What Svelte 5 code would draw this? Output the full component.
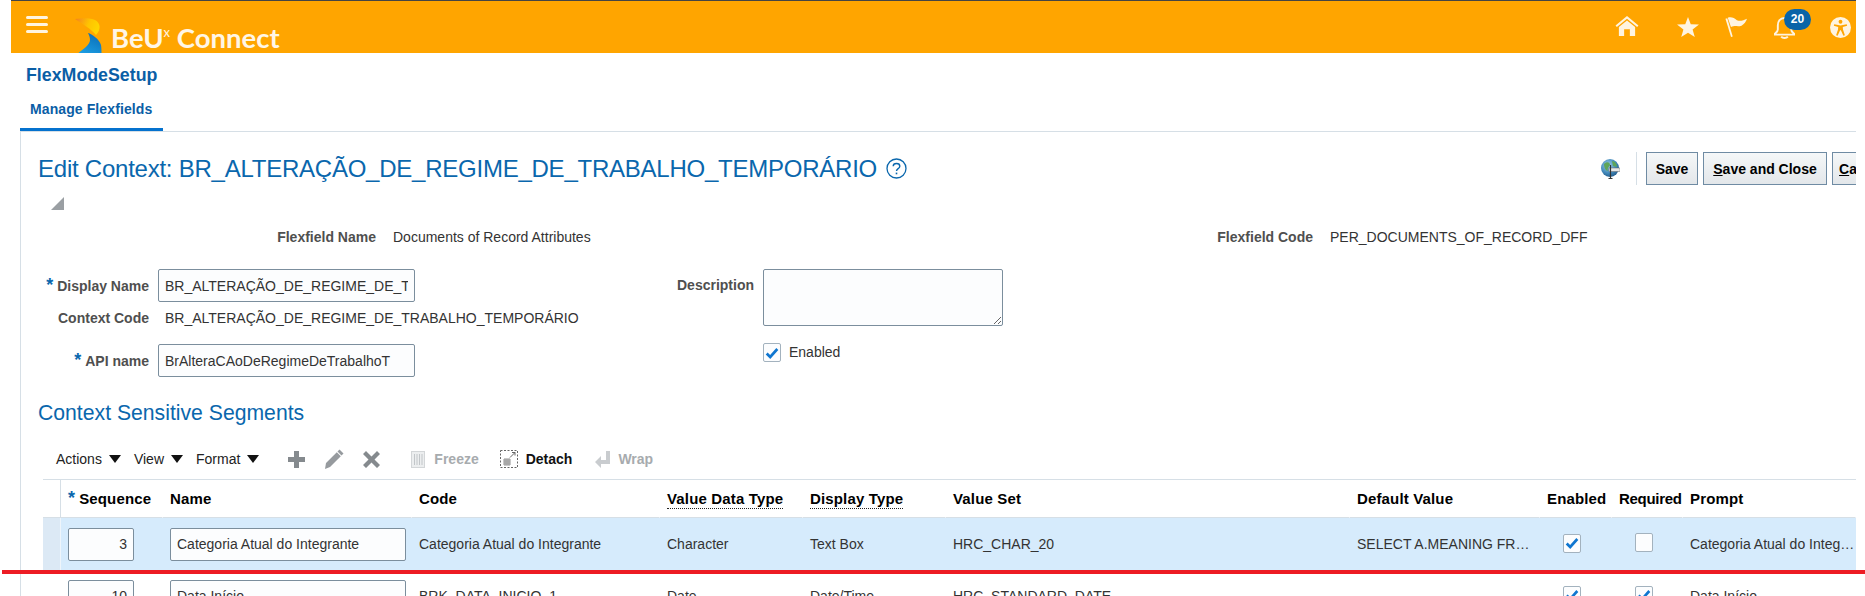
<script lang="ts">
  const columns = [
    { label: '', width: 18, key: 'sel' },
    { label: 'Sequence', width: 102, required: true },
    { label: 'Name', width: 249 },
    { label: 'Code', width: 248 },
    { label: 'Value Data Type', width: 143, dotted: true },
    { label: 'Display Type', width: 143, dotted: true },
    { label: 'Value Set', width: 404 },
    { label: 'Default Value', width: 190 },
    { label: 'Enabled', width: 72 },
    { label: 'Required', width: 71, tight: true },
    { label: 'Prompt', width: 173 }
  ];

  const rows = [
    {
      sequence: '3',
      name: 'Categoria Atual do Integrante',
      code: 'Categoria Atual do Integrante',
      dataType: 'Character',
      displayType: 'Text Box',
      valueSet: 'HRC_CHAR_20',
      defaultValue: 'SELECT A.MEANING FROM FND_LOOKUP_VALUES A',
      enabled: true,
      required: false,
      prompt: 'Categoria Atual do Integrante',
      selected: true
    },
    {
      sequence: '10',
      name: 'Data Início',
      code: 'BRK_DATA_INICIO_1',
      dataType: 'Date',
      displayType: 'Date/Time',
      valueSet: 'HRC_STANDARD_DATE',
      defaultValue: '',
      enabled: true,
      required: true,
      prompt: 'Data Início',
      selected: false
    }
  ];
</script>

{#snippet check(on)}
  <span class="check">
    {#if on}
      <svg viewBox="0 0 18 18" width="16" height="16" aria-hidden="true">
        <path d="M3 9.5 L7 13.5 L15 4.5" fill="none" stroke="#0f76d0" stroke-width="3" />
      </svg>
    {/if}
  </span>
{/snippet}

<div class="page">
  <header class="topbar">
    <div class="brand">
      <div class="burger"><i></i><i></i><i></i></div>
      <svg class="mark" viewBox="0 0 27 35" width="27" height="35" aria-hidden="true">
        <defs>
          <linearGradient id="markTop" x1="0" y1="0" x2="1" y2="0.3">
            <stop offset="0" stop-color="#f4801f" />
            <stop offset="0.6" stop-color="#ffc400" />
            <stop offset="1" stop-color="#ffd400" />
          </linearGradient>
          <linearGradient id="markBottom" x1="0.2" y1="1" x2="0.7" y2="0">
            <stop offset="0" stop-color="#1b9ce2" />
            <stop offset="1" stop-color="#0b6fb8" />
          </linearGradient>
        </defs>
        <path d="M0 1 C8 0 16 0 20 2 C26 5 26 12 21 17 C16 11 8 6 0 1 Z" fill="url(#markTop)" />
        <path d="M13 15 C17 16 24 21 26 27 C26.5 30 26.5 33 26.5 35 H3.5 C8 31 15 27 15 22 C15 19 14 17 13 15 Z" fill="url(#markBottom)" />
      </svg>
      <span class="brand-name">BeU<sup>x</sup> Connect</span>
    </div>
    <div class="top-icons">
      <svg class="i-home" viewBox="0 0 24 22" width="24" height="21" aria-hidden="true">
        <path d="M12 0 L24 10 L22.6 11.4 L12 2.8 L1.4 11.4 L0 10 Z M3.5 11.5 L12 4.6 L20.5 11.5 V21 H15 V14 H9 V21 H3.5 Z" fill="#fff4e0" />
      </svg>
      <svg class="i-star" viewBox="0 0 24 22" width="22" height="22" aria-hidden="true">
        <path d="M12 0 L15 8 L24 8.4 L17 13.6 L19.4 22 L12 17.2 L4.6 22 L7 13.6 L0 8.4 L9 8 Z" fill="#fff4e0" />
      </svg>
      <svg class="i-flag" viewBox="0 0 24 22" width="22" height="22" aria-hidden="true">
        <path d="M0.5 2 L2.5 1.4 L8.4 21.4 L6.6 22 Z" fill="#fff4e0" />
        <path d="M3 1 C7 -0.5 10 1.5 13 3.5 C16 5 20 4 24 2 C23 5 21 8 18 9.5 C14 11 11 9 6.5 11 Z" fill="#fff4e0" />
      </svg>
      <div class="bell-wrap">
        <svg viewBox="0 0 22 24" width="21" height="23" aria-hidden="true">
          <path d="M11 2 C6 2 4 6 4 10 V14 C4 16 2.5 17 1 18.5 V19.5 H21 V18.5 C19.5 17 18 16 18 14 V10 C18 6 16 2 11 2 Z" fill="none" stroke="#fff4e0" stroke-width="2" />
          <path d="M7.5 21.5 C9 23.5 13 23.5 14.5 21.5" fill="none" stroke="#fff4e0" stroke-width="2" />
        </svg>
        <span class="badge">20</span>
      </div>
      <svg class="i-access" viewBox="0 0 22 22" width="21" height="21" aria-hidden="true">
        <circle cx="11" cy="11" r="11" fill="#fff4e0" />
        <circle cx="11" cy="5" r="2" fill="#ffa500" />
        <path d="M4.5 7.6 L11 9 L17.5 7.6 L18 9.2 L13.4 10.6 L13.6 13 L15.6 19 L14 19.6 L11.4 14 H10.6 L8 19.6 L6.4 19 L8.4 13 L8.6 10.6 L4 9.2 Z" fill="#ffa500" />
      </svg>
    </div>
  </header>

  <div class="app-title">FlexModeSetup</div>
  <nav class="tabs">
    <span class="tab">Manage Flexfields</span>
  </nav>

  <main class="panel">
    <div class="title-row">
      <h1>Edit Context: BR_ALTERAÇÃO_DE_REGIME_DE_TRABALHO_TEMPORÁRIO</h1>
      <svg class="help" viewBox="0 0 21 21" width="21" height="21" aria-hidden="true">
        <circle cx="10.5" cy="10.5" r="9.5" fill="none" stroke="#0a67ad" stroke-width="1.3" />
        <path d="M7.2 8.2 C7.2 4.6 13.8 4.6 13.8 8.2 C13.8 10.6 10.5 10.6 10.5 13" fill="none" stroke="#0a67ad" stroke-width="1.4" />
        <rect x="9.7" y="14.6" width="1.6" height="1.7" fill="#0a67ad" />
      </svg>
      <div class="actions">
        <svg class="globe" viewBox="0 0 19 20" width="19" height="20" aria-hidden="true">
          <defs>
            <radialGradient id="globeFill" cx="0.4" cy="0.35" r="0.75">
              <stop offset="0" stop-color="#9fd1ea" />
              <stop offset="0.6" stop-color="#3f86b8" />
              <stop offset="1" stop-color="#1d4f7c" />
            </radialGradient>
          </defs>
          <circle cx="9" cy="9" r="9" fill="url(#globeFill)" />
          <path d="M3 5 C6 2 9 3 9 6 C8 8 6 9 7 12 C5 12 3 9 3 5 Z M11 2 C14 2 16 5 16 8 L12 7 Z" fill="#5fa55a" />
          <rect x="8" y="9" width="11" height="3.5" fill="#e7e7e7" stroke="#666" stroke-width="0.5" />
          <path d="M9.5 6 V19 M7.5 19.5 H11.5" stroke="#333" stroke-width="1.2" />
        </svg>
        <span class="divider"></span>
        <button type="button" class="btn btn--save">Save</button>
        <button type="button" class="btn btn--close"><u>S</u>ave and Close</button>
        <button type="button" class="btn btn--cancel"><u>C</u>ancel</button>
      </div>
    </div>

    <svg class="collapse" viewBox="0 0 13 13" width="13" height="13" aria-hidden="true">
      <path d="M13 0 V13 H0 Z" fill="#9a9fa3" />
    </svg>

    <div class="meta">
      <span class="label">Flexfield Name</span>
      <span class="value">Documents of Record Attributes</span>
      <span class="label">Flexfield Code</span>
      <span class="value">PER_DOCUMENTS_OF_RECORD_DFF</span>
    </div>

    <div class="form">
      <div class="form-left">
        <span class="label"><em>*</em>Display Name</span>
        <input class="field" readonly value="BR_ALTERAÇÃO_DE_REGIME_DE_TRABALHO_TEMPORÁRIO" />
        <span class="label label--static">Context Code</span>
        <span class="value value--static">BR_ALTERAÇÃO_DE_REGIME_DE_TRABALHO_TEMPORÁRIO</span>
        <span class="label"><em>*</em>API name</span>
        <input class="field" readonly value="BrAlteraCAoDeRegimeDeTrabalhoT" />
      </div>
      <div class="form-right">
        <span class="label">Description</span>
        <textarea class="area" readonly></textarea>
        <span></span>
        <label class="enabled">{@render check(true)}<span>Enabled</span></label>
      </div>
    </div>

    <h2>Context Sensitive Segments</h2>

    <div class="toolbar">
      <span class="menu">Actions <i class="caret"></i></span>
      <span class="menu">View <i class="caret"></i></span>
      <span class="menu">Format <i class="caret"></i></span>
      <svg class="tool tool--add" viewBox="0 0 17 17" width="17" height="17" aria-hidden="true">
        <path d="M6 0 H11 V6 H17 V11 H11 V17 H6 V11 H0 V6 H6 Z" fill="#858a8e" />
      </svg>
      <svg class="tool tool--edit" viewBox="0 0 20 20" width="20" height="20" aria-hidden="true">
        <path d="M15.5 0.5 L19.5 4.5 L17.5 6.5 L13.5 2.5 Z M12.8 3.2 L16.8 7.2 L6 18 L1 20 L2 14 Z" fill="#969a9e" />
      </svg>
      <svg class="tool tool--del" viewBox="0 0 17 17" width="17" height="17" aria-hidden="true">
        <path d="M3 0 L8.5 5.5 L14 0 L17 3 L11.5 8.5 L17 14 L14 17 L8.5 11.5 L3 17 L0 14 L5.5 8.5 L0 3 Z" fill="#858a8e" />
      </svg>
      <svg class="tool tool--freeze" viewBox="0 0 14 17" width="14" height="17" aria-hidden="true">
        <rect x="0.5" y="0.5" width="13" height="16" fill="#eceeef" stroke="#d3d6d8" />
        <path d="M3.5 3 V14 M6 3 V14 M8.5 3 V14 M11 3 V14" stroke="#c2c6c9" />
      </svg>
      <span class="tool-label tool-label--off tl-freeze">Freeze</span>
      <svg class="tool tool--detach" viewBox="0 0 18 18" width="18" height="18" aria-hidden="true">
        <rect x="0.5" y="0.5" width="17" height="17" fill="none" stroke="#666" stroke-dasharray="2 1.5" />
        <path d="M10 7.5 L15 2.5 M12 2.5 H15 V5.5" fill="none" stroke="#666" />
        <path d="M4 9 H10 V15 H4 Z M6 9 V15 M8 9 V15 M4 11 H10 M4 13 H10" fill="none" stroke="#777" stroke-width="0.8" />
      </svg>
      <span class="tool-label tl-detach">Detach</span>
      <svg class="tool tool--wrap" viewBox="0 0 15 17" width="15" height="17" aria-hidden="true">
        <path d="M11 0 H15 V13 H6 V17 L0 11 L6 5 V9 H11 Z" fill="#c9cccf" />
      </svg>
      <span class="tool-label tool-label--off tl-wrap">Wrap</span>
    </div>

    <table>
      <colgroup>
        {#each columns as col}
          <col style="width: {col.width}px" />
        {/each}
      </colgroup>
      <thead>
        <tr>
          {#each columns as col}
            <th class:sel={col.key === 'sel'} class:tight={col.tight}>
              {#if col.required}<em>*</em>{/if}<span class:dotted={col.dotted}>{col.label}</span>
            </th>
          {/each}
        </tr>
      </thead>
      <tbody>
        {#each rows as row}
          <tr class:selected={row.selected}>
            <td class="sel"></td>
            <td><input class="field field--seq" readonly value={row.sequence} /></td>
            <td><input class="field field--name" readonly value={row.name} /></td>
            <td>{row.code}</td>
            <td>{row.dataType}</td>
            <td>{row.displayType}</td>
            <td>{row.valueSet}</td>
            <td class="clip">{row.defaultValue}</td>
            <td class="center">{@render check(row.enabled)}</td>
            <td class="center">{@render check(row.required)}</td>
            <td class="clip clip--last">{row.prompt}</td>
          </tr>
        {/each}
      </tbody>
    </table>
  </main>

  <div class="redline"></div>
</div>

<style>
  :global(body) {
    margin: 0;
    background: #fff;
  }

  .page {
    position: relative;
    width: 1865px;
    height: 596px;
    overflow: hidden;
    font-family: "Liberation Sans", Arial, sans-serif;
    font-size: 14px;
    color: #333;
    background: #fff;
  }

  /* everything but the red marker stops at 1856 */
  .topbar,
  .app-title,
  .tabs,
  .panel {
    width: 1845px;
    margin-left: 11px;
    box-sizing: border-box;
  }

  .topbar {
    display: flex;
    justify-content: space-between;
    height: 53px;
    background: #ffa500;
    border-top: 1px solid #444;
    overflow: hidden;
  }

  .brand {
    display: flex;
    align-items: flex-start;
  }

  .burger {
    display: flex;
    flex-direction: column;
    gap: 4px;
    width: 22px;
    margin: 15px 0 0 15px;
  }

  .burger i {
    display: block;
    height: 3px;
    border-radius: 2px;
    background: #fff4e0;
  }

  .mark {
    margin: 17px 0 0 27px;
  }

  .brand-name {
    margin: 20px 0 0 9px;
    font-family: Lato, "Open Sans", sans-serif;
    font-weight: 700;
    font-size: 27.5px;
    line-height: 34px;
    color: #fff6e6;
    white-space: nowrap;
  }

  .brand-name sup {
    font-size: 13px;
    font-weight: 400;
    line-height: 0;
    vertical-align: 11px;
  }

  .top-icons {
    display: flex;
    align-items: flex-start;
  }

  .i-home { margin: 15px 0 0 0; }
  .i-star { margin: 15px 0 0 38px; }
  .i-flag { margin: 15px 0 0 26px; }

  .bell-wrap {
    position: relative;
    width: 21px;
    height: 23px;
    margin: 15px 0 0 27px;
  }

  .badge {
    position: absolute;
    left: 10px;
    top: -7px;
    width: 27px;
    height: 21px;
    border-radius: 11px;
    background: #0a64a8;
    color: #fff;
    font-size: 12px;
    font-weight: 700;
    line-height: 21px;
    text-align: center;
  }

  .i-access { margin: 16px 5px 0 35px; }

  .app-title {
    height: 44px;
    padding-left: 15px;
    font-size: 17.8px;
    font-weight: 700;
    line-height: 44px;
    color: #0a5ea6;
  }

  .tabs {
    width: 1836px;
    margin-left: 20px;
    height: 35px;
    border-bottom: 1px solid #d6dfe6;
  }

  .tab {
    display: block;
    box-sizing: border-box;
    width: 143px;
    height: 34px;
    padding-left: 10px;
    border-bottom: 3px solid #0572ce;
    font-size: 14px;
    font-weight: 700;
    letter-spacing: 0.1px;
    line-height: 24px;
    color: #0a5ea6;
  }

  .panel {
    width: 1836px;
    margin-left: 20px;
    height: 464px;
    border-left: 1px solid #d6dfe6;
    overflow: hidden;
  }

  .title-row {
    display: flex;
    align-items: center;
    height: 33px;
    margin-top: 20px;
    padding-left: 17px;
  }

  h1 {
    margin: 0;
    font-size: 24px;
    font-weight: 400;
    letter-spacing: -0.24px;
    line-height: 33px;
    color: #0a67ad;
    white-space: nowrap;
  }

  .help {
    margin-left: 9px;
  }

  .actions {
    display: flex;
    align-items: center;
    margin-left: auto;
    margin-right: -36px;
  }

  .globe {
    margin-right: 16px;
  }

  .divider {
    width: 1px;
    height: 33px;
    margin-right: 9px;
    background: #d6dfe6;
  }

  .btn {
    box-sizing: border-box;
    height: 33px;
    padding: 0;
    margin-right: 5px;
    border: 1px solid #6f8ba3;
    background: linear-gradient(#f5f7f8, #e3e7ea);
    font-family: inherit;
    font-size: 14px;
    font-weight: 700;
    color: #000;
  }

  .btn--save { width: 52px; }
  .btn--close { width: 124px; }
  .btn--cancel { width: 60px; margin-right: 0; }

  .collapse {
    display: block;
    margin: 12px 0 0 30px;
  }

  .meta {
    display: grid;
    grid-template-columns: 355px 741px 168px 1fr;
    column-gap: 14px;
    margin-top: 19px;
    line-height: 16px;
  }

  .meta .value {
    padding-left: 3px;
  }

  .label {
    font-weight: 700;
    color: #4f4f4f;
    text-align: right;
    white-space: nowrap;
  }

  .label em,
  th em {
    margin-right: 4px;
    font-style: normal;
    font-size: 18px;
    color: #0a67ad;
    line-height: 10px;
  }

  .value {
    white-space: nowrap;
  }

  .form {
    display: flex;
    margin-top: 24px;
  }

  .form-left {
    display: grid;
    grid-template-columns: 128px 257px;
    grid-template-rows: 33px 42px 33px;
    column-gap: 9px;
    align-items: center;
  }

  .label--static,
  .value--static {
    align-self: start;
    margin-top: 8px;
    line-height: 16px;
  }

  .value--static {
    padding-left: 7px;
  }

  .field {
    box-sizing: border-box;
    width: 100%;
    height: 33px;
    padding: 0 6px;
    border: 1px solid #7b8e9d;
    border-radius: 2px;
    outline: none;
    background: #fcfdfe;
    font-family: inherit;
    font-size: 14px;
    color: #333;
  }

  .form-right {
    display: grid;
    grid-template-columns: 139px 240px;
    column-gap: 9px;
    row-gap: 17px;
    align-items: start;
    margin-left: 200px;
    align-content: start;
  }

  .form-right .label {
    line-height: 33px;
  }

  .area {
    display: block;
    box-sizing: border-box;
    width: 240px;
    height: 57px;
    border: 1px solid #7b8e9d;
    border-radius: 2px;
    outline: none;
    background: #fcfdfe;
  }

  .enabled {
    display: flex;
    align-items: center;
    gap: 8px;
    height: 19px;
  }

  .enabled span:last-child {
    margin-top: -2px;
  }

  .check {
    display: inline-flex;
    align-items: center;
    justify-content: center;
    box-sizing: border-box;
    width: 18px;
    height: 19px;
    border: 1px solid #a3b2be;
    border-radius: 2px;
    background: #fcfdfe;
  }

  h2 {
    margin: 24px 0 0 17px;
    font-size: 21.2px;
    font-weight: 400;
    line-height: 24px;
    color: #0a67ad;
  }

  .toolbar {
    display: flex;
    align-items: center;
    height: 26px;
    margin: 21px 0 7px 35px;
    color: #222;
  }

  .menu {
    display: flex;
    align-items: center;
    gap: 7px;
    margin-right: 13px;
    white-space: nowrap;
  }

  .caret {
    width: 0;
    height: 0;
    border-left: 6px solid transparent;
    border-right: 6px solid transparent;
    border-top: 8px solid #111;
  }

  .tool--add { margin-left: 16px; }
  .tool--edit { margin-left: 19px; }
  .tool--del { margin-left: 19px; }
  .tool--freeze { margin-left: 31px; }
  .tool--detach { margin-left: 21px; }
  .tool--wrap { margin-left: 23px; }

  .tool-label {
    margin-left: 8px;
    font-weight: 700;
    color: #111;
  }

  .tl-freeze {
    margin-left: 9px;
  }

  .tool-label--off {
    color: #a7abae;
  }

  table {
    table-layout: fixed;
    width: 1813px;
    margin-left: 22px;
    border-collapse: separate;
    border-spacing: 0;
    border-top: 1px solid #d6dfe6;
  }

  th {
    box-sizing: border-box;
    height: 38px;
    padding: 0 0 0 7px;
    border-bottom: 1px solid #d6dfe6;
    border-right: 1px solid #fff;
    font-size: 15px;
    font-weight: 700;
    letter-spacing: 0.15px;
    color: #000;
    text-align: left;
    white-space: nowrap;
  }

  th.tight {
    letter-spacing: -0.3px;
  }

  th.sel {
    border-right: 1px solid #d6dfe6;
    border-bottom-color: #d6dfe6;
  }

  .dotted {
    padding-bottom: 1px;
    border-bottom: 1px dotted #222;
  }

  td {
    box-sizing: border-box;
    height: 52px;
    padding: 0 7px;
    overflow: hidden;
    white-space: nowrap;
  }

  td.clip {
    text-overflow: ellipsis;
  }

  td.clip--last {
    padding-right: 0;
  }

  td.center {
    padding: 0 0 0 23px;
  }

  tr.selected td {
    background: #d6ebfc;
  }

  tr.selected td.sel {
    background: #dce9f5;
    border-right: 1px solid #eef5fb;
  }

  .field--seq {
    width: 66px;
    text-align: right;
  }

  .field--name {
    width: 236px;
  }

  .redline {
    position: absolute;
    left: 2px;
    right: 0;
    top: 570px;
    height: 4px;
    background: #ed1c24;
  }
</style>
